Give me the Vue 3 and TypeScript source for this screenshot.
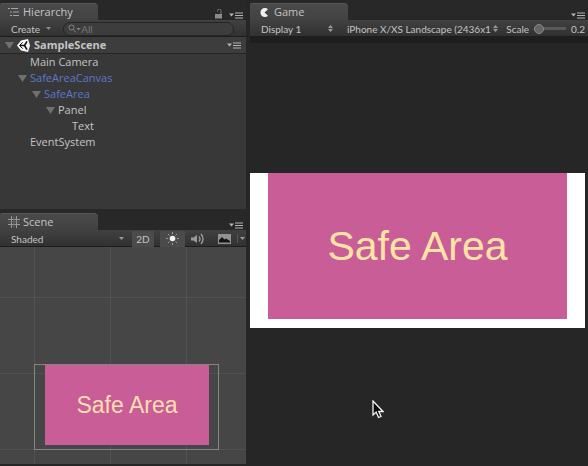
<script setup lang="ts">
import { computed, ref } from 'vue'

interface TreeNode {
  name: string
  depth: number
  expandable?: boolean
  prefab?: boolean
}

const nodes: TreeNode[] = [
  { name: 'Main Camera', depth: 1 },
  { name: 'SafeAreaCanvas', depth: 1, expandable: true, prefab: true },
  { name: 'SafeArea', depth: 2, expandable: true, prefab: true },
  { name: 'Panel', depth: 3, expandable: true },
  { name: 'Text', depth: 4 },
  { name: 'EventSystem', depth: 1 },
]

const collapsed = ref<string[]>([])
const query = ref('')
const scale = ref(0.2)
const display = ref('Display 1')
const resolution = ref('iPhone X/XS Landscape (2436x1125)')
const shading = ref('Shaded')

const visibleNodes = computed(() => {
  const out: TreeNode[] = []
  let hiddenBelow = Infinity
  for (const node of nodes) {
    if (node.depth > hiddenBelow) continue
    hiddenBelow = collapsed.value.includes(node.name) ? node.depth : Infinity
    if (node.name.toLowerCase().includes(query.value.toLowerCase())) out.push(node)
  }
  return out
})

function toggle(name: string) {
  collapsed.value = collapsed.value.includes(name)
    ? collapsed.value.filter((n) => n !== name)
    : [...collapsed.value, name]
}
</script>

<template>
  <main class="editor">
    <div class="left">
      <section class="panel hierarchy">
        <header class="tabbar">
          <button class="tab">
            <svg width="12" height="10" viewBox="0 0 12 10" fill="none" stroke="#a4a4a4">
              <path d="M0 1.500h2M3 1.500h7M2 5h2M5 5h6M2 8.500h2M5 8.500h6" />
            </svg>
            Hierarchy
          </button>
          <span class="tools">
            <button class="icon" aria-label="Lock">
              <svg width="8" height="10" viewBox="0 0 8 10">
                <path d="M0 5h7v4.500H0z" fill="#8c8c8c" />
                <path d="M2.500 2.500V1.500a1.500 1.200 0 0 1 3.500 0V5" fill="none" stroke="#777" />
              </svg>
            </button>
            <button class="icon" aria-label="Hierarchy options">
              <svg width="15" height="7" viewBox="0 0 15 7">
                <path d="M0 1.500h5L2.500 4.500z" fill="#b4b4b4" />
                <path d="M6 1h8M6 3.500h8M6 6h8" stroke="#b4b4b4" />
              </svg>
            </button>
          </span>
        </header>
        <div class="toolbar">
          <button class="create">
            Create
            <svg width="5" height="3" viewBox="0 0 5 3"><path d="M0 0h5L2.500 3z" fill="#8e8e8e" /></svg>
          </button>
          <label class="search">
            <svg width="13" height="9" viewBox="0 0 13 9" fill="none" stroke="#858585">
              <circle cx="3.500" cy="3.500" r="2.500" /><path d="M5.500 5.500L8 8.500" />
              <path d="M8.500 4h4l-2 2.500z" fill="#858585" stroke="none" />
            </svg>
            <input v-model="query" type="text" placeholder="All" aria-label="Search hierarchy" />
          </label>
        </div>
        <div class="scene-row">
          <button class="fold" aria-label="Toggle SampleScene">
            <svg width="9" height="7" viewBox="0 0 9 7"><path d="M0 0h9L4.500 7z" fill="#707070" /></svg>
          </button>
          <svg width="13" height="13" viewBox="0 0 13 13">
            <path d="M0 6.500L4 1.500 11 0 13 6.500 11 13 4 11.500z" fill="#f8f8f8" />
            <path d="M7.500 6.500H2.800M7.500 6.500L10 2.300M7.500 6.500L10 10.700" fill="none" stroke="#101010" stroke-width="1.600" />
            <path d="M2.600 6.500L5.600 3.400M2.600 6.500L5.600 9.600" fill="none" stroke="#101010" />
          </svg>
          <strong>SampleScene</strong>
          <button class="icon end" aria-label="Scene options">
            <svg width="15" height="7" viewBox="0 0 15 7">
              <path d="M0 1.500h5L2.500 4.500z" fill="#b4b4b4" />
              <path d="M6 1h8M6 3.500h8M6 6h8" stroke="#b4b4b4" />
            </svg>
          </button>
        </div>
        <ul class="tree">
          <li
            v-for="node in visibleNodes"
            :key="node.name"
            :class="{ prefab: node.prefab }"
            :style="{ paddingLeft: `${node.depth * 14 + 4}px` }"
          >
            <button v-if="node.expandable" class="fold" :aria-label="`Toggle ${node.name}`" @click="toggle(node.name)">
              <svg width="9" height="7" viewBox="0 0 9 7"><path d="M0 0h9L4.500 7z" fill="#707070" /></svg>
            </button>
            <span v-else class="fold"></span>
            {{ node.name }}
          </li>
        </ul>
      </section>

      <section class="panel scene">
        <header class="tabbar">
          <button class="tab">
            <svg width="12" height="12" viewBox="0 0 12 12" fill="none" stroke="#999">
              <path d="M3.500 0v12M8.500 0v12M0 3.500h12M0 8.500h12" /><path d="M6 1v10M1 6h10" stroke="#686868" />
            </svg>
            Scene
          </button>
          <span class="tools">
            <button class="icon" aria-label="Scene view options">
              <svg width="15" height="7" viewBox="0 0 15 7">
                <path d="M0 1.500h5L2.500 4.500z" fill="#b4b4b4" />
                <path d="M6 1h8M6 3.500h8M6 6h8" stroke="#b4b4b4" />
              </svg>
            </button>
          </span>
        </header>
        <div class="toolbar">
          <span class="picker shading">
            <select v-model="shading" aria-label="Draw mode"><option>Shaded</option><option>Wireframe</option></select>
            <svg width="5" height="3" viewBox="0 0 5 3"><path d="M0 0h5L2.500 3z" fill="#999" /></svg>
          </span>
          <button class="tool on">2D</button>
          <button class="tool on light" aria-label="Scene lighting">
            <svg width="13" height="13" viewBox="0 0 13 13">
              <path d="M6.500 0v2M6.500 11v2M0 6.500h2M11 6.500h2M2 2l1.500 1.500M9.500 9.500L11 11M11 2L9.500 3.500M3.500 9.500L2 11" stroke="#999" />
              <circle cx="6.500" cy="6.500" r="2.800" fill="#f4f4f4" />
            </svg>
          </button>
          <button class="tool" aria-label="Scene audio">
            <svg width="14" height="12" viewBox="0 0 14 12">
              <path d="M0 4.500h2.500L6 2v8L2.500 7.500H0z" fill="#999" />
              <path d="M8 3.500q2 2.500 0 5M10 1q4 5 0 10" fill="none" stroke="#999" stroke-width="1.400" />
            </svg>
          </button>
          <button class="tool" aria-label="Scene effects">
            <svg width="13" height="10" viewBox="0 0 13 10">
              <path d="M0 0h13v10H0z" fill="#929292" />
              <path d="M1 8.500V6l3-3 2.500 2.500L8 4.500 12 7v1.500z" fill="#151515" />
            </svg>
          </button>
          <button class="more" aria-label="More effects">
            <svg width="5" height="3" viewBox="0 0 5 3"><path d="M0 0h5L2.500 3z" fill="#999" /></svg>
          </button>
        </div>
        <div class="scene-view">
          <div class="scene-canvas"><div class="safe small">Safe Area</div></div>
        </div>
      </section>
    </div>

    <section class="panel game">
      <header class="tabbar">
        <button class="tab">
          <svg width="9" height="9" viewBox="0 0 9 9">
            <path d="M8 1.200A4.500 4.500 0 1 0 8 7.800L4.500 4.500z" fill="#f0f0f0" />
          </svg>
          Game
        </button>
        <span class="tools">
          <button class="icon" aria-label="Game view options">
            <svg width="15" height="7" viewBox="0 0 15 7">
              <path d="M0 1.500h5L2.500 4.500z" fill="#b4b4b4" />
              <path d="M6 1h8M6 3.500h8M6 6h8" stroke="#b4b4b4" />
            </svg>
          </button>
        </span>
      </header>
      <div class="toolbar">
        <span class="picker display">
          <select v-model="display" aria-label="Display"><option>Display 1</option><option>Display 2</option></select>
          <svg width="5" height="7" viewBox="0 0 5 7"><path d="M0 3h5L2.500 0zM0 4h5L2.500 7z" fill="#999" /></svg>
        </span>
        <span class="picker resolution">
          <select v-model="resolution" aria-label="Resolution">
            <option>iPhone X/XS Landscape (2436x1125)</option>
            <option>Free Aspect</option>
          </select>
          <svg width="5" height="7" viewBox="0 0 5 7"><path d="M0 3h5L2.500 0zM0 4h5L2.500 7z" fill="#999" /></svg>
        </span>
        <label class="scale">
          Scale
          <input v-model.number="scale" type="range" min="0.2" max="5" step="0.1" />
          <output>{{ scale }}</output>
        </label>
      </div>
      <div class="game-view">
        <div class="device"><div class="safe large">Safe Area</div></div>
        <svg class="cursor" width="12" height="19" viewBox="0 0 12 19">
          <path d="M1 1v14l3.200-3 2.300 5.500 2.500-1L6.800 11.500H11z" fill="#080808" stroke="#f2f2f2" stroke-width="1.300" />
        </svg>
      </div>
    </section>
  </main>
</template>

<style>
body {
  margin: 0;
  background: #262626;
}
</style>

<style scoped>
.editor {
  display: grid;
  grid-template-columns: 246fr 338fr;
  gap: 4px;
  box-sizing: border-box;
  height: 100vh;
  padding-bottom: 2px;
  overflow: hidden;
  background: #262626;
  color: #c4c4c4;
  font: 11px/16px "Open Sans", "Noto Sans", sans-serif;
}
.left {
  display: grid;
  grid-template-rows: 209fr 255fr;
  min-width: 0;
  min-height: 0;
}
.panel {
  display: flex;
  flex-direction: column;
  min-width: 0;
  min-height: 0;
}
button,
select,
input {
  margin: 0;
  padding: 0;
  border: 0;
  background: none;
  color: inherit;
  font: inherit;
  appearance: none;
}
svg {
  flex: none;
}
.tabbar {
  display: flex;
  justify-content: space-between;
  align-items: flex-end;
  flex: none;
  height: 20px;
  background: #282828;
}
.scene .tabbar {
  height: 21px;
}
.tab {
  display: flex;
  align-items: center;
  gap: 3px;
  width: 98px;
  height: 17px;
  padding-left: 8px;
  border-top: 1px solid #565656;
  border-radius: 2px 4px 0 0;
  background: linear-gradient(#4a4a4a, #424242);
}
.game .tab {
  gap: 5px;
  padding-left: 10px;
}
.tools {
  display: flex;
  align-items: flex-end;
  gap: 6px;
  padding: 0 2px 1px 0;
}
.icon {
  display: flex;
}
.toolbar {
  display: flex;
  align-items: center;
  flex: none;
  height: 17px;
  overflow: hidden;
  background: linear-gradient(#414141, #303030);
  box-shadow: inset 0 -1px #1d1d1d;
  font-family: Lato, "Open Sans", sans-serif;
  font-size: 10px;
}
.create {
  display: flex;
  align-items: center;
  gap: 6px;
  padding-left: 11px;
}
.search {
  display: flex;
  align-items: center;
  flex: 1;
  min-width: 0;
  height: 12px;
  margin: 0 12px;
  padding-left: 4px;
  border: 1px solid #252525;
  border-radius: 8px;
  background: #3d3d3d;
}
.search input {
  width: 100%;
  min-width: 0;
  outline: 0;
}
.search input::placeholder {
  color: #777;
  opacity: 1;
}
.scene-row {
  display: flex;
  align-items: center;
  flex: none;
  box-sizing: border-box;
  height: 17px;
  padding: 0 4px 0 5px;
  border-bottom: 1px solid #252525;
  background: #3d3d3d;
}
.scene-row strong {
  margin-left: 4px;
}
.end {
  margin-left: auto;
}
.tree {
  flex: 1;
  min-height: 0;
  margin: 0;
  padding: 0;
  overflow: hidden;
  background: #383838;
  list-style: none;
}
.tree li {
  display: flex;
  align-items: center;
  height: 16px;
}
.tree .prefab {
  color: #5b79cc;
}
.fold {
  display: flex;
  flex: none;
  width: 12px;
}
.picker {
  display: flex;
  align-items: center;
  min-width: 0;
}
.picker select {
  flex: 1;
  min-width: 0;
  overflow: hidden;
  white-space: nowrap;
}
.shading {
  flex: 1;
  padding: 0 8px 0 11px;
}
.tool {
  display: flex;
  align-items: center;
  justify-content: center;
  width: 26px;
  height: 16px;
}
.on {
  width: 22px;
  background: #4b4b4b;
}
.light {
  width: 25px;
  margin-left: 6px;
}
.more {
  display: flex;
  padding: 3px 1px 3px 2px;
  border-left: 1px solid #555;
}
.scene-view {
  display: flex;
  align-items: flex-end;
  flex: 1;
  min-height: 0;
  padding: 0 27px 14px 34px;
  background:
    linear-gradient(90deg, #525252 1px, transparent 1px) 34px 0 / 76px 76px,
    linear-gradient(0deg, #525252 1px, transparent 1px) 0 calc(100% - 14px) / 76px 76px,
    #464646;
}
.scene-canvas {
  display: flex;
  flex: 1;
  box-sizing: border-box;
  aspect-ratio: 185 / 86;
  padding: 0 9px 4px 10px;
  border: 1px solid #858585;
}
.safe {
  display: flex;
  align-items: center;
  justify-content: center;
  flex: 1;
  background: #c95d98;
  color: #ffe5a5;
  font-family: "Liberation Sans", Arial, sans-serif;
}
.small {
  font-size: 23px;
  color: #ffdfb0;
}
.large {
  font-size: 41px;
}
.display {
  flex: none;
  width: 72px;
  padding-left: 11px;
}
.resolution {
  flex: 1;
  gap: 1px;
  padding-left: 14px;
}
.scale {
  display: flex;
  align-items: center;
  gap: 5px;
  padding: 0 3px 0 8px;
}
.scale input {
  width: 32px;
  height: 10px;
  background: linear-gradient(#595959, #595959) center / 100% 3px no-repeat;
}
.scale input::-webkit-slider-thumb {
  width: 10px;
  height: 10px;
  border: 1px solid #888;
  border-radius: 50%;
  background: #666;
  appearance: none;
}
.game-view {
  position: relative;
  display: flex;
  align-items: center;
  flex: 1;
  min-height: 0;
  padding-right: 3px;
  background: linear-gradient(#1e1e1e 6px, #262626 6px);
}
.device {
  display: flex;
  flex: 1;
  box-sizing: border-box;
  aspect-ratio: 335 / 155;
  padding: 0 18px 9px;
  background: #fff;
}
.cursor {
  position: absolute;
  top: 85%;
  left: 36%;
}
</style>
